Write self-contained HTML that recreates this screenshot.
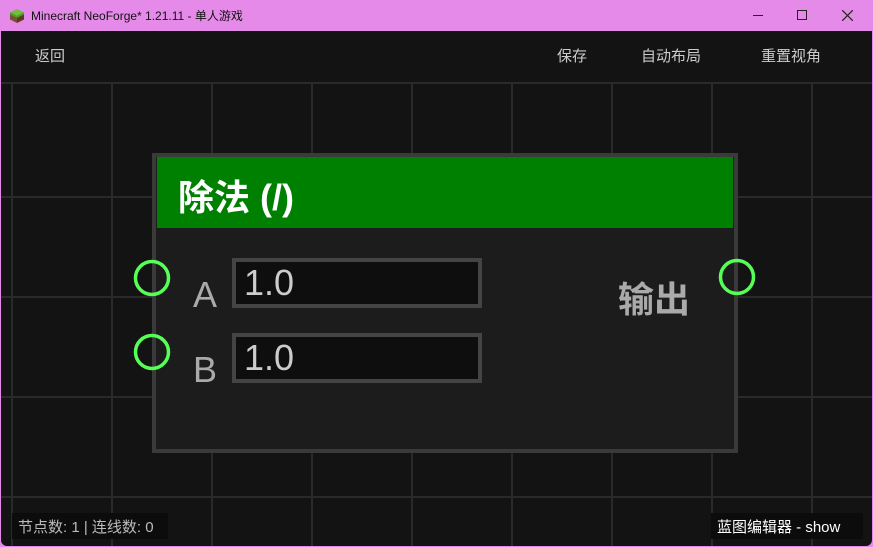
<!DOCTYPE html>
<html><head><meta charset="utf-8"><style>
*{margin:0;padding:0;box-sizing:border-box}
body{width:873px;height:547px;overflow:hidden;background:#e68ae9;font-family:"Liberation Sans","Noto Sans CJK SC",sans-serif;position:relative}
.t{position:absolute;white-space:nowrap}
#app{position:absolute;left:1px;top:31px;width:871px;height:515px;background:#131313;overflow:hidden;border-radius:0 0 6px 6px}
.v{position:absolute;top:52px;bottom:0;width:2px;background:#2a2a2a}
.h{position:absolute;left:0;right:0;height:2px;background:#2a2a2a}
</style></head><body>
<svg class="t" style="left:9px;top:8px" width="16" height="16" viewBox="0 0 16 16"><path d="M8 1L15 4.5 8 8 1 4.5Z" fill="#6fbf3c"/><path d="M1 4.5L8 8V15L1 11.5Z" fill="#7a5230"/><path d="M15 4.5L8 8V15L15 11.5Z" fill="#5b3b20"/><path d="M1 4.5L8 8 15 4.5V6.5L8 10 1 6.5Z" fill="#4e9a2a"/></svg>
<div class="t" style="left:31px;top:7px;font-size:12px;color:#111">Minecraft NeoForge* 1.21.11 - 单人游戏</div>
<div class="t" style="left:753px;top:15px;width:10px;height:1px;background:#222"></div>
<div class="t" style="left:797px;top:10px;width:10px;height:10px;border:1px solid #222"></div>
<svg class="t" style="left:842px;top:10px" width="11" height="11"><path d="M0 0L11 11M11 0L0 11" stroke="#222" stroke-width="1.2"/></svg>
<div id="app">
<div class="h" style="top:51px;"></div>
<div class="v" style="left:10px"></div><div class="v" style="left:110px"></div><div class="v" style="left:210px"></div><div class="v" style="left:310px"></div><div class="v" style="left:410px"></div><div class="v" style="left:510px"></div><div class="v" style="left:610px"></div><div class="v" style="left:710px"></div><div class="v" style="left:810px"></div>
<div class="h" style="top:165px"></div><div class="h" style="top:265px"></div><div class="h" style="top:365px"></div><div class="h" style="top:465px"></div>
<div class="t" style="left:34px;top:14px;font-size:15px;color:#ccc">返回</div>
<div class="t" style="left:556px;top:14px;font-size:15px;color:#ccc">保存</div>
<div class="t" style="left:640px;top:14px;font-size:15px;color:#ccc">自动布局</div>
<div class="t" style="left:760px;top:14px;font-size:15px;color:#ccc">重置视角</div>
<div class="t" style="left:151px;top:122px;width:586px;height:300px;background:#1c1c1c;border:4px solid #3a3a3a"></div>
<div class="t" style="left:156px;top:126px;width:576px;height:71px;background:#008000"></div>
<div class="t" style="left:177px;top:138px;font-size:36px;font-weight:bold;color:#fff">除法 (/)</div>
<div class="t" style="left:231px;top:227px;width:250px;height:50px;background:#0e0e0e;border:4px solid #444"></div>
<div class="t" style="left:231px;top:302px;width:250px;height:50px;background:#0e0e0e;border:4px solid #444"></div>
<div class="t" style="left:243px;top:231px;font-size:36px;color:#ccc">1.0</div>
<div class="t" style="left:243px;top:306px;font-size:36px;color:#ccc">1.0</div>
<div class="t" style="left:192px;top:243px;font-size:36px;color:#aaa">A</div>
<div class="t" style="left:192px;top:318px;font-size:36px;color:#aaa">B</div>
<div class="t" style="left:617px;top:240px;font-size:36px;font-weight:bold;color:#aaa">输出</div>
<svg class="t" style="left:0;top:0" width="871" height="515"><g fill="none" stroke="#55ff55" stroke-width="3.5"><circle cx="151" cy="247" r="16.5"/><circle cx="151" cy="321" r="16.5"/><circle cx="736" cy="246" r="16.5"/></g></svg>
<div class="t" style="left:11px;top:482px;height:26px;width:156px;background:#0c0c0c"></div>
<div class="t" style="left:17px;top:485px;font-size:15px;color:#bbb">节点数: 1 | 连线数: 0</div>
<div class="t" style="left:710px;top:482px;height:26px;width:152px;background:#0c0c0c"></div>
<div class="t" style="left:716px;top:485px;font-size:15px;color:#fff">蓝图编辑器 - show</div>
</div>
</body></html>
